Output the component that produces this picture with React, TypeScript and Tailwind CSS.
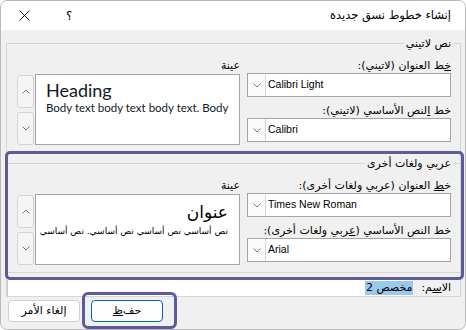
import React from "react";

const arabic = "font-['DejaVu_Sans',sans-serif]";
const latin = "font-['Liberation_Sans',sans-serif]";

const Chevron = ({ up }: { up?: boolean }) => (
  <svg width="8" height="5" viewBox="0 0 8 5" className={up ? "rotate-180" : ""}>
    <path d="M0.5 0.5 L4 4 L7.5 0.5" fill="none" stroke="#7a7a7a" strokeWidth="1" />
  </svg>
);

const Combo = ({ value }: { value: string }) => (
  <div dir="ltr" className="flex h-[24px] w-[204px] border border-[#a5a5a5] bg-white">
    <div className="flex w-[18px] items-center justify-center border-r border-[#d6d6d6] bg-[#fbfbfb]">
      <Chevron />
    </div>
    <span className={`flex items-center pl-[2px] text-[10.5px] text-black ${latin}`}>{value}</span>
  </div>
);

const ScrollButtons = () => (
  <div className="mt-[17px] flex w-[17px] flex-col gap-[4px]">
    <div className="flex h-[33px] items-center justify-center rounded-[3px] border border-[#d3d3d3] bg-[#f5f5f5]">
      <Chevron up />
    </div>
    <div className="flex h-[33px] items-center justify-center rounded-[3px] border border-[#d3d3d3] bg-[#f5f5f5]">
      <Chevron />
    </div>
  </div>
);

type SectionProps = {
  title: string;
  titleRight: string;
  headLabel: React.ReactNode;
  bodyLabel: React.ReactNode;
  headFont: string;
  bodyFont: string;
  sample: React.ReactNode;
  padRight: string;
};

const Section = ({ title, titleRight, headLabel, bodyLabel, headFont, bodyFont, sample, padRight }: SectionProps) => (
  <div className="flex flex-col">
    <div className="-mt-[8px] flex h-[15px]">
      <span className={`${titleRight} bg-[#f0f0f0] px-[2px] text-[11px] leading-[15px] text-black ${arabic}`}>
        {title}
      </span>
    </div>
    <div className={`flex gap-[7px] pt-[7px] ${padRight}`}>
      <div className="flex flex-col">
        <span className={`h-[15px] text-[11px] leading-[15px] text-black ${arabic}`}>{headLabel}</span>
        <Combo value={headFont} />
        <span className={`mt-[6px] h-[15px] text-[11px] leading-[15px] text-black ${arabic}`}>{bodyLabel}</span>
        <Combo value={bodyFont} />
      </div>
      <div className="flex gap-[1px]">
        <div className="flex flex-col">
          <span className={`h-[16px] text-[11px] leading-[15px] text-black ${arabic}`}>عينة</span>
          <div className="h-[71px] w-[205px] overflow-hidden border border-[#a5a5a5] bg-white">{sample}</div>
        </div>
        <ScrollButtons />
      </div>
    </div>
  </div>
);

export default function App() {
  return (
    <div dir="rtl" className={`h-[330px] w-[466px] overflow-hidden rounded-[7px] border border-[#b9b9b9] bg-[#f0f0f0] ${arabic}`}>
      <div className="flex h-[29px] items-center justify-between bg-white pl-[18px] pr-[14px]">
        <span className="text-[11.5px] text-black">إنشاء خطوط نسق جديدة</span>
        <div className="flex items-center gap-[36px]">
          <span className="text-[12px] text-black">؟</span>
          <svg width="11" height="11" viewBox="0 0 11 11">
            <path d="M0.5 0.5 L10.5 10.5 M10.5 0.5 L0.5 10.5" stroke="#1a1a1a" strokeWidth="1" />
          </svg>
        </div>
      </div>

      <div className="flex flex-col pt-[13px]">
        <div className="mr-[4px] w-[455px] self-start border border-[#d5d5d5]">
          <div className="h-[107px]">
            <Section
              title="نص لاتيني"
              titleRight="mr-[7px]"
              padRight="pr-[9px]"
              headLabel={<><span className="underline">خ</span>ط العنوان (لاتيني):</>}
              bodyLabel={<>خط <span className="underline">ا</span>لنص الأساسي (لاتيني):</>}
              headFont="Calibri Light"
              bodyFont="Calibri"
              sample={
                <div dir="ltr" className="flex flex-col pl-[10px] pt-[4px] font-['Lato',sans-serif] text-[#111827]">
                  <span className="text-[18px] font-normal leading-[22px]">Heading</span>
                  <span className="whitespace-nowrap text-[11.5px] leading-[14px]">Body text body text body text. Body</span>
                </div>
              }
            />
          </div>

          <div className="-ml-[2px] -mr-[4px] h-[129px] rounded-[5px] border-[3px] border-[#5c5a9b]">
            <div className="mt-[9px] h-[110px] border-y border-[#d5d5d5]">
              <Section
                title="عربي ولغات أخرى"
                titleRight="mr-[8px]"
                padRight="pr-[10px]"
                headLabel={<>خ<span className="underline">ط</span> العنوان (عربي ولغات أخرى):</>}
                bodyLabel={<>خط النص الأساسي (<span className="underline">ع</span>ربي ولغات أخرى):</>}
                headFont="Times New Roman"
                bodyFont="Arial"
                sample={
                  <div className="flex flex-col pr-[11px] pt-[5px] text-black">
                    <span className="text-[17px] leading-[24px]">عنوان</span>
                    <span className="whitespace-nowrap text-[9px] leading-[14px]">نص أساسي نص أساسي نص أساسي. نص أساسي</span>
                  </div>
                }
              />
            </div>
          </div>

          <div className="flex h-[16px] items-stretch gap-[8px] pr-[9px]">
            <span className="text-[11px] leading-[16px] text-black">
              الا<span className="underline">س</span>م:
            </span>
            <div className="flex flex-1 items-center border-l border-[#c8c8c8] bg-white">
              <span className="bg-[#99c9ef] px-[1px] text-[11px] leading-[14px] text-black">مخصص 2</span>
            </div>
          </div>
        </div>

        <div className="mt-[3px] flex justify-end gap-[11px] pl-[7px]">
          <div className="relative">
            <button className="flex h-[22px] w-[72px] items-center justify-center rounded-[4px] border border-[#0067c0] bg-[#fdfdfd] text-[11px] text-black">
              حف<span className="underline">ظ</span>
            </button>
            <span className="pointer-events-none absolute -bottom-[7px] -left-[9px] -right-[14px] -top-[8px] rounded-[6px] border-[3px] border-[#5c5a9b]" />
          </div>
          <button className="flex h-[22px] w-[72px] items-center justify-center rounded-[4px] border border-[#d0d0d0] bg-[#fdfdfd] text-[11px] text-black">
            إلغاء الأمر
          </button>
        </div>
      </div>
    </div>
  );
}
